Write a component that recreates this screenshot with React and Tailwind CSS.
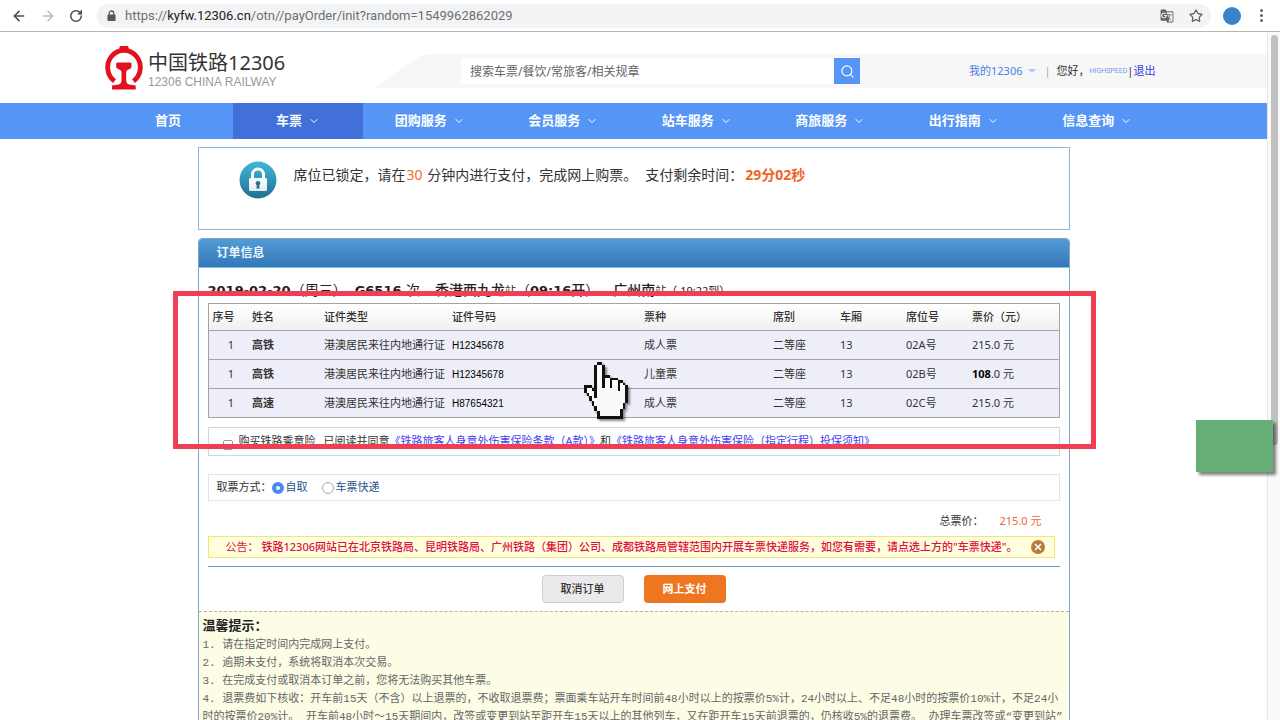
import React, { useState } from 'react';
import { ArrowLeft, ArrowRight, RotateCw, ChevronDown, Search, Star, X } from 'lucide-react';
import { MdGTranslate } from 'react-icons/md';

const navItems = ['团购服务', '会员服务', '站车服务', '商旅服务', '出行指南', '信息查询'];

const passengers = [
  { name: '高铁', id: 'H12345678', ticket: '成人票', seat: '02A号', price: '215', bold: false },
  { name: '高铁', id: 'H12345678', ticket: '儿童票', seat: '02B号', price: '108', bold: true },
  { name: '高速', id: 'H87654321', ticket: '成人票', seat: '02C号', price: '215', bold: false },
];

const tips = [
  '1. 请在指定时间内完成网上支付。',
  '2. 逾期未支付，系统将取消本次交易。',
  '3. 在完成支付或取消本订单之前，您将无法购买其他车票。',
  '4. 退票费如下核收：开车前15天（不含）以上退票的，不收取退票费；票面乘车站开车时间前48小时以上的按票价5%计，24小时以上、不足48小时的按票价10%计，不足24小时的按票价20%计。 开车前48小时～15天期间内，改签或变更到站至距开车15天以上的其他列车，又在距开车15天前退票的，仍核收5%的退票费。 办理车票改签或“变更到站”时，新车',
];

// pixel map of the pointer, X = outline
const hand = [
  '.....XX',
  '....X..X',
  '....X..X',
  '....X..X',
  '....X..X',
  '....X..XXX',
  '....X..X..XXX',
  '....X..X..X..XX',
  '....X..X..X..X.X',
  'XXX.X..X..X..X..X',
  'X..XX........X..X',
  'X...X...........X',
  '.X..X...........X',
  '..X.X...........X',
  '..X.............X',
  '...X............X',
  '...X...........X',
  '....X..........X',
  '....X.........X',
  '.....X........X',
  '.....X........X',
  '.....XXXXXXXXXX',
];

const HandPointer = ({ className }) => (
  <svg viewBox="0 0 17 22" className={className} shapeRendering="crispEdges" aria-hidden="true">
    {hand.map((row, y) => {
      // the gap between thumb and finger stays see-through
      const start = y === 9 ? 4 : row.indexOf('X');
      return <rect key={y} x={start} y={y} width={row.length - start} height="1" fill="#fafafa" />;
    })}
    {hand.map((row, y) =>
      row.split('').map((c, x) => (c === 'X' ? <rect key={`${x}-${y}`} x={x} y={y} width="1" height="1" fill="#111" /> : null))
    )}
  </svg>
);

const RailwayLogo = () => (
  <svg viewBox="0 0 38 44" className="w-[38px] h-[44px] shrink-0" aria-hidden="true">
    <path d="M9.5 35.2 A16.3 17 0 1 1 28.500 35.200" fill="none" stroke="#e3101f" strokeWidth="4.8" />
    <path d="M15 0h8l1.500 5h-11z" fill="#e3101f" />
    <path
      d="M12.800 16.500h12.400q1.300 0 1.300 1.300v3q0 1.200-1 1.700l-3 1.500q-1.300.8-1.300 2.500v8q0 3 3 4l6.500 1v4H7v-4l6.500-1q3-1 3-4v-8q0-1.700-1.300-2.500l-3-1.500q-1-.5-1-1.700v-3q0-1.300 1.600-1.300z"
      fill="#e3101f"
    />
  </svg>
);

const LockBadge = () => (
  <svg viewBox="0 0 38 38" className="w-[38px] h-[38px] shrink-0" aria-hidden="true">
    <defs>
      <linearGradient id="lockBg" x1="0" y1="0" x2="0" y2="1">
        <stop offset="0" stopColor="#3fb9dc" />
        <stop offset="1" stopColor="#216f8d" />
      </linearGradient>
      <linearGradient id="lockFg" x1="0" y1="0" x2="0" y2="1">
        <stop offset="0" stopColor="#fff" />
        <stop offset="1" stopColor="#e4eaee" />
      </linearGradient>
    </defs>
    <circle cx="19" cy="19" r="18.5" fill="url(#lockBg)" />
    <path d="M13.500 19v-5.500a5.500 5.500 0 0 1 11 0V19" fill="none" stroke="#fff" strokeWidth="3" />
    <rect x="10" y="17" width="18" height="13" rx="1.500" fill="url(#lockFg)" />
    <circle cx="19" cy="22.300" r="2.300" fill="#21718f" />
    <path d="M18 23h2l.7 4.500h-3.400z" fill="#21718f" />
  </svg>
);

const BrowserBar = () => (
  <div className="flex h-8 items-center border-b border-[#b5b5b5] bg-white pl-[11px] pr-[14px] font-['Roboto',sans-serif] text-[#5f6368]">
    <button aria-label="后退" className="w-[17px]"><ArrowLeft size={16} strokeWidth={2.4} className="text-[#4a4d51]" /></button>
    <button aria-label="前进" className="ml-3 w-[17px]"><ArrowRight size={16} strokeWidth={2.2} className="text-[#b9bbbe]" /></button>
    <button aria-label="刷新" className="ml-3 w-[17px]"><RotateCw size={14} strokeWidth={2.6} className="text-[#4a4d51]" /></button>
    <div className="ml-[11px] flex h-6 flex-1 items-center rounded-full bg-[#f1f3f4] pl-[10px] pr-2">
      <svg viewBox="0 0 10 12" className="w-[9px] h-[11px]" aria-hidden="true">
        <rect x="0.500" y="5" width="9" height="7" rx="1" fill="#55585c" />
        <path d="M2.500 5.500V3.500a2.500 2.500 0 0 1 5 0v2" fill="none" stroke="#55585c" strokeWidth="1.400" />
      </svg>
      <span className="ml-[9px] flex-1 text-[13px] leading-4 text-[#6c7075]">
        https://<span className="text-[#202124]">kyfw.12306.cn</span>/otn//payOrder/init?random=1549962862029
      </span>
      <MdGTranslate size={14} className="text-[#5f6368]" />
      <Star size={14} strokeWidth={2.2} className="ml-[15px]" />
    </div>
    <span className="ml-3 h-[18px] w-[18px] rounded-full bg-[#3586cd]" />
    <button aria-label="更多" className="ml-[15px] flex w-[10px] flex-col items-center gap-[2px]">
      <span className="h-[3px] w-[3px] rounded-full bg-[#5f6368]" />
      <span className="h-[3px] w-[3px] rounded-full bg-[#5f6368]" />
      <span className="h-[3px] w-[3px] rounded-full bg-[#5f6368]" />
    </button>
  </div>
);

const SiteHeader = () => (
  <header className="flex h-[71px] items-start">
    <div className="flex w-[373px] shrink-0 pl-[105px] pt-[14px]">
      <RailwayLogo />
      <div className="ml-[5px] whitespace-nowrap pt-[5px]">
        <div className="text-[20px] leading-[24px] text-[#333]">中国铁路12306</div>
        <div className="font-['Liberation_Sans',sans-serif] text-[12px] leading-[14px] text-[#999]">12306 CHINA RAILWAY</div>
      </div>
    </div>
    <svg viewBox="0 0 70 34" className="mt-[22px] w-[70px] h-[34px] shrink-0" aria-hidden="true">
      <path d="M0 34L44 4q5-4 16-4h10v34z" fill="#f7f7f7" />
    </svg>
    <div className="mt-[22px] flex h-[34px] flex-1 items-center bg-[#f7f7f7] pl-[18px]">
      <input
        type="text"
        aria-label="搜索"
        defaultValue="搜索车票/餐饮/常旅客/相关规章"
        className="h-[26px] w-[373px] bg-white px-[9px] text-[12px] text-[#666] outline-none"
      />
      <button aria-label="搜索" className="flex h-[26px] w-[26px] items-center justify-center bg-[#5595f5] text-white">
        <Search size={15} strokeWidth={1.8} />
      </button>
      <div className="ml-[109px] flex items-center whitespace-nowrap text-[11px] text-[#333]">
        <a href="#my" className="text-[#4c7fe8]">我的12306</a>
        <svg viewBox="0 0 8 4" className="ml-[6px] w-2 h-1" aria-hidden="true"><path d="M0 0h8L4 4z" fill="#a9c8f5" /></svg>
        <span className="ml-2 text-[#aaa]">|</span>
        <span className="ml-[6px]">您好，</span>
        <a href="#user" className="font-['Roboto',sans-serif] text-[7px] text-[#6f9cec]">HIGHSPEED</a>
        <span>|</span>
        <a href="#logout" className="text-[#3b3bea]">退出</a>
      </div>
    </div>
  </header>
);

const SiteNav = () => (
  <nav className="bg-[#5595f6] text-[13px] font-bold text-white">
    <div className="mx-auto flex h-[36px] max-w-[1061px] items-stretch">
      <a href="#home" className="flex w-[130px] items-center justify-center">首页</a>
      <a href="#ticket" className="flex w-[130px] items-center justify-center gap-[6px] bg-[#4170da]">
        车票<ChevronDown size={12} strokeWidth={2} />
      </a>
      {navItems.map((item) => (
        <a key={item} href="#nav" className="flex flex-1 items-center justify-center gap-[6px]">
          {item}<ChevronDown size={12} strokeWidth={2} />
        </a>
      ))}
    </div>
  </nav>
);

const PassengerTable = () => (
  <div className="relative mt-[3px]">
    <table className="w-full table-fixed border-collapse border border-[#a3a3a8] text-left text-[11px] text-[#333]">
      <colgroup>
        <col className="w-[40px]" />
        <col className="w-[72px]" />
        <col className="w-[128px]" />
        <col className="w-[192px]" />
        <col className="w-[129px]" />
        <col className="w-[67px]" />
        <col className="w-[66px]" />
        <col className="w-[66px]" />
        <col />
      </colgroup>
      <thead>
        <tr className="h-[27px] bg-linear-to-b from-white to-[#f0f0f1]">
          {['序号', '姓名', '证件类型', '证件号码', '票种', '席别', '车厢', '席位号', '票价（元）'].map((h) => (
            <th key={h} className="px-1 font-medium">{h}</th>
          ))}
        </tr>
      </thead>
      <tbody>
        {passengers.map((p) => (
          <tr key={p.seat} className="h-[29px] border-t border-[#a3a3a8] bg-[#eeeef9]">
            <td className="pr-[14px] text-right">1</td>
            <td className="px-1 font-bold">{p.name}</td>
            <td className="whitespace-nowrap px-1">港澳居民来往内地通行证</td>
            <td className="px-1 font-['Liberation_Sans',sans-serif] text-[10px] text-black">{p.id}</td>
            <td className="px-1">{p.ticket}</td>
            <td className="px-1">二等座</td>
            <td className="px-1">13</td>
            <td className="px-1">{p.seat}</td>
            <td className="px-1"><span className={p.bold ? 'font-bold text-black' : ''}>{p.price}</span>.0 元</td>
          </tr>
        ))}
      </tbody>
    </table>
    {/* highlight frame and pointer lie over the table */}
    <div className="pointer-events-none absolute -left-[35px] -right-[36px] -top-[12px] -bottom-[31px] z-10 border-[5px] border-[#f03e55]" />
    <HandPointer className="absolute left-[376px] top-[59px] z-20 w-[44px] h-[57px] drop-shadow-[2px_2px_1px_rgba(0,0,0,0.45)]" />
  </div>
);

const radioClass =
  'h-3 w-3 appearance-none rounded-full border border-[#a8a8a8] bg-white checked:border-4 checked:border-[#4a8af0]';

const OrderPanel = () => {
  const [pickup, setPickup] = useState('self');
  const [insured, setInsured] = useState(false);
  const [showNotice, setShowNotice] = useState(true);

  return (
    <section className="mt-2 rounded-t border border-[#7fa6c9] text-[11px] text-[#333]">
      <h2 className="rounded-t-[3px] border-b border-[#7cc7ee] bg-linear-to-b from-[#529dd6] to-[#3477b7] pl-[18px] text-[12px] font-bold leading-[28px] text-[#eaf6ff]">
        订单信息
      </h2>
      <div className="px-[9px]">
        <h3 className="mt-3 h-5 whitespace-nowrap font-['DejaVu_Sans','Noto_Sans_CJK_SC',sans-serif] text-[14px] leading-[20px] text-[#222]">
          <b className="text-[13px]">2019-02-20</b>（周三）<b className="ml-2 text-[13px]">G6516</b> 次
          <span className="ml-[15px] font-medium">香港西九龙</span>
          <span className="text-[11px]">站</span>（<b className="text-[13px]">09:16</b><span className="font-medium">开</span>）
          <span className="font-medium">—广州南</span>
          <span className="font-['Noto_Sans','Noto_Sans_CJK_SC',sans-serif] text-[11px]">站（ 19:22到）</span>
        </h3>

        <PassengerTable />

        <div className="mt-[9px] flex h-[29px] items-center whitespace-nowrap border border-[#c9dbe2] pl-[14px]">
          <input
            id="insurance"
            type="checkbox"
            checked={insured}
            onChange={(e) => setInsured(e.target.checked)}
            className="mt-[6px] h-[10px] w-[10px] appearance-none rounded-xs border border-[#999] bg-white checked:bg-[#4a8af0]"
          />
          <label htmlFor="insurance" className="ml-[6px]">购买铁路乘意险</label>
          <span className="ml-2">已阅读并同意</span>
          <a href="#terms" className="text-[#4343f0]">《铁路旅客人身意外伤害保险条款（A款）》</a>
          <span>和</span>
          <a href="#notice" className="text-[#4343f0]">《铁路旅客人身意外伤害保险（指定行程）投保须知》</a>
        </div>

        <div className="mt-[18px] flex h-[27px] items-center border border-[#dde6ea] pl-2">
          <span>取票方式：</span>
          <input id="self" type="radio" name="pickup" checked={pickup === 'self'} onChange={() => setPickup('self')} className={radioClass} />
          <label htmlFor="self" className="ml-[2px] text-[#2c5488]">自取</label>
          <input id="express" type="radio" name="pickup" checked={pickup === 'express'} onChange={() => setPickup('express')} className={`ml-[14px] ${radioClass}`} />
          <label htmlFor="express" className="ml-[2px] text-[#2c5488]">车票快递</label>
        </div>

        <div className="mt-[10px] flex justify-end pr-[18px] leading-[20px]">
          <span>总票价：</span>
          <span className="ml-[16px] text-[#ee6530]">215.0 元</span>
        </div>

        {showNotice && (
          <div className="mt-[5px] mr-[5px] flex h-[22px] items-center whitespace-nowrap border border-[#f3e76a] bg-[#ffffe0] pl-[17px] pr-[9px] text-[#e0123c]">
            <span>公告：</span>
            <span className="ml-[3px] flex-1 font-medium">
              铁路12306网站已在北京铁路局、昆明铁路局、广州铁路（集团）公司、成都铁路局管辖范围内开展车票快递服务，如您有需要，请点选上方的"车票快递"。
            </span>
            <button
              aria-label="关闭"
              onClick={() => setShowNotice(false)}
              className="flex h-[14px] w-[14px] items-center justify-center rounded-full bg-[#b97a3c] text-white"
            >
              <X size={10} strokeWidth={4} />
            </button>
          </div>
        )}

        <div className="mt-[8px] flex justify-center gap-5 border-t border-[#6f97bd] py-2 font-medium">
          <button className="h-[28px] w-[82px] rounded border border-[#cfcdcf] bg-[#ebe9eb]">取消订单</button>
          <button className="h-[28px] w-[82px] rounded bg-[#ee7621] font-bold text-white">网上支付</button>
        </div>
      </div>

      <div className="border-t border-dashed border-[#b5b5a5] bg-[#fdfde6] pl-1 pt-1 text-[#666]">
        <h3 className="mb-[2px] text-[13px] font-bold leading-[18px] text-[#222]">温馨提示：</h3>
        {tips.map((tip) => (
          <p key={tip} className="font-['Liberation_Mono','Noto_Sans_CJK_SC',monospace] leading-[18px]">{tip}</p>
        ))}
      </div>
    </section>
  );
};

const App = () => {
  return (
    <div className="relative flex h-screen flex-col overflow-hidden bg-white font-['Noto_Sans','Noto_Sans_CJK_SC',sans-serif]" lang="zh-CN">
      <BrowserBar />
      <div className="flex min-h-0 flex-1">
        <div className="min-w-0 flex-1 overflow-hidden">
          <SiteHeader />
          <SiteNav />
          <main className="mx-auto mt-[8px] max-w-[872px]">
            <section className="flex h-[83px] border border-[#8fb4d6] pl-10 pt-[13px]">
              <LockBadge />
              <p className="ml-[17px] mt-[3px] text-[14px] leading-[22px] text-[#333]">
                席位已锁定，请在<span className="mx-px text-[#f26a36]">30</span> 分钟内进行支付，完成网上购票。
                <span className="ml-2">支付剩余时间：</span>
                <b className="ml-[2px] text-[#ee6428]">29分02秒</b>
              </p>
            </section>
            <OrderPanel />
          </main>
        </div>
        <div className="w-[13px] border-l border-[#e8e8e8] bg-[#fafafa] pt-[3px] pl-[3px]">
          <div className="h-[410px] w-[7px] rounded-full bg-[#c1c1c1]" />
        </div>
      </div>
      <div className="absolute right-[7px] top-[420px] z-30 h-[52px] w-[77px] bg-[#66b077] shadow-[3px_3px_3px_rgba(0,0,0,0.5)]" />
    </div>
  );
};

export default App;
